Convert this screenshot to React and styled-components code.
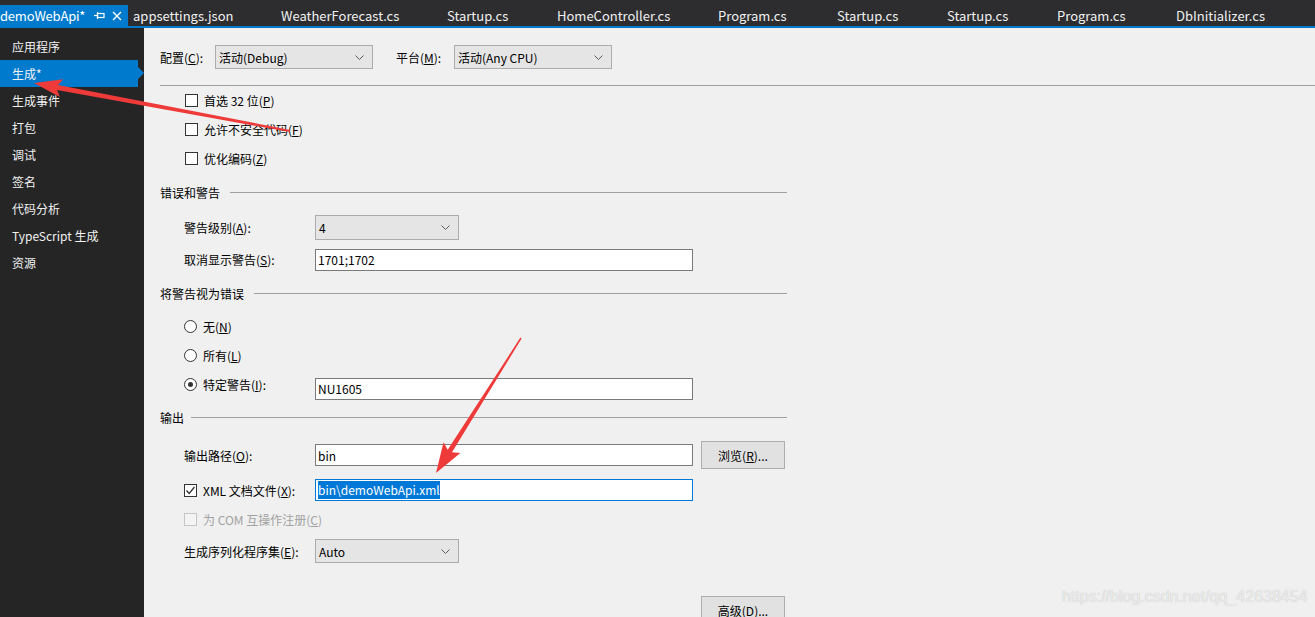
import React from 'react'
import styled, { createGlobalStyle } from 'styled-components'

const GlobalStyle = createGlobalStyle`
  html, body {
    margin: 0;
    padding: 0;
    background: #f0f0f0;
    overflow: hidden;
  }
  body {
    font-family: "Noto Sans CJK SC", "Noto Sans", sans-serif;
  }
`

const Page = styled.div`
  position: relative;
  width: 1315px;
  height: 617px;
  display: flex;
  flex-direction: column;
  overflow: hidden;
  background: #f0f0f0;
`

const TabBar = styled.div`
  flex: none;
  height: 26px;
  display: flex;
  align-items: flex-end;
  background: #2d2d30;
  border-bottom: 2px solid #007acc;
  white-space: nowrap;
  overflow: hidden;
`

const Tab = styled.div`
  flex: none;
  width: ${p => p.$w}px;
  height: 21px;
  box-sizing: border-box;
  display: flex;
  align-items: center;
  padding-left: ${p => (p.$active ? 0 : 5)}px;
  background: ${p => (p.$active ? '#007acc' : 'transparent')};
  color: ${p => (p.$active ? '#ffffff' : '#f1f1f1')};
  font-size: 13px;
  line-height: 21px;
`

const TabTitle = styled.span`
  flex: none;
  letter-spacing: -0.2px;
`

const TabIcons = styled.span`
  display: flex;
  align-items: center;
  gap: 7px;
  margin-left: 9px;
`

const Main = styled.div`
  flex: 1;
  display: flex;
  min-height: 0;
`

const Sidebar = styled.nav`
  flex: none;
  width: 144px;
  box-sizing: border-box;
  padding-top: 4.5px;
  background: #252526;
`

const NavItem = styled.div`
  position: relative;
  width: 138px;
  height: 27px;
  box-sizing: border-box;
  padding-left: 12px;
  line-height: 27px;
  font-size: 12px;
  color: #f1f1f1;
  background: ${p => (p.$active ? '#007acc' : 'transparent')};

  &::after {
    content: '';
    display: ${p => (p.$active ? 'block' : 'none')};
    position: absolute;
    left: 138px;
    top: 7px;
    border-left: 6px solid #007acc;
    border-top: 6.5px solid transparent;
    border-bottom: 6.5px solid transparent;
  }
`

const Panel = styled.main`
  flex: 1;
  box-sizing: border-box;
  padding: 12px 0 0 16px;
  font-size: 12px;
  color: #000;
`

const TopRow = styled.div`
  height: 34px;
  display: flex;
  align-items: center;
`

const TopLabel = styled.span`
  flex: none;
  width: ${p => p.$w}px;
  margin-left: ${p => p.$ml || 0}px;
  white-space: nowrap;
`

const Rule = styled.div`
  margin-top: 11px;
  height: 1px;
  background: #a0a0a0;
`

const Column = styled.div`
  width: 627px;
`

const CheckRow = styled.div`
  height: 29px;
  display: flex;
  align-items: center;
  gap: 6px;
  padding-left: 25px;
`

const SectionHead = styled.div`
  height: 20px;
  margin-top: ${p => p.$mt}px;
  display: flex;
  align-items: center;

  &::after {
    content: '';
    flex: 1;
    height: 1px;
    margin-left: ${p => p.$gap || 10}px;
    background: #a0a0a0;
  }
`

const SectionBody = styled.div`
  padding: ${p => p.$pt}px 0 0 24px;
`

const FieldRow = styled.div`
  height: ${p => p.$h}px;
  display: flex;
  align-items: center;
`

const LabelCell = styled.div`
  flex: none;
  width: 131px;
  display: flex;
  align-items: center;
  gap: 6px;
  white-space: nowrap;
  color: ${p => (p.$disabled ? '#a2a2a2' : '#000')};
`

const SelectBox = styled.div`
  flex: none;
  width: ${p => p.$w}px;
  height: ${p => p.$h || 25}px;
  box-sizing: border-box;
  display: flex;
  align-items: center;
  justify-content: space-between;
  padding: 0 8px 0 3px;
  border: 1px solid #acacac;
  background: #e5e5e5;
  font-size: 12px;
`

const TextBox = styled.div`
  flex: none;
  width: 378px;
  height: 22px;
  box-sizing: border-box;
  display: flex;
  align-items: center;
  padding-left: 2px;
  margin-top: ${p => p.$shift || 0}px;
  border: 1px solid ${p => (p.$focus ? '#0078d7' : '#7a7a7a')};
  background: #fff;
  font-size: 12px;
`

const Selected = styled.span`
  background: #0078d7;
  color: #fff;
  line-height: 18px;
`

const Button = styled.div`
  flex: none;
  width: 84px;
  height: 28px;
  box-sizing: border-box;
  margin-left: ${p => p.$ml || 0}px;
  display: flex;
  align-items: center;
  justify-content: center;
  border: 1px solid #adadad;
  background: #e1e1e1;
  font-size: 12px;
`

const BottomRow = styled.div`
  margin-top: 24px;
  display: flex;
  justify-content: flex-end;
  padding-right: 2px;
`

const Box = styled.span`
  flex: none;
  width: 13px;
  height: 13px;
  box-sizing: border-box;
  display: inline-flex;
  align-items: center;
  justify-content: center;
  border: 1px solid ${p => (p.$disabled ? '#c6c6c6' : '#333')};
  border-radius: ${p => (p.$round ? '50%' : '0')};
  background: ${p => (p.$disabled ? '#f4f4f4' : '#fff')};
`

const Dot = styled.span`
  width: 5px;
  height: 5px;
  border-radius: 50%;
  background: #333;
`

const Key = styled.u`
  text-underline-offset: 1px;
`

const Overlay = styled.svg`
  position: absolute;
  left: 0;
  top: 0;
  pointer-events: none;
`

const Watermark = styled.div`
  position: absolute;
  left: 1062px;
  top: 588px;
  font-family: "Liberation Sans", Arial, sans-serif;
  font-size: 16px;
  color: #ececec;
  text-shadow: 0 0 1px #b8b8b8;
  pointer-events: none;
`

const Chevron = () => (
  <svg width="9" height="5" viewBox="0 0 9 5">
    <polyline points="0.5,0.5 4.5,4.5 8.5,0.5" fill="none" stroke="#5a5a5a" strokeWidth="1" />
  </svg>
)

const Check = ({ checked, disabled }) => (
  <Box $disabled={disabled}>
    {checked && (
      <svg width="11" height="11" viewBox="0 0 11 11">
        <polyline points="1.5,5.5 4.2,8.5 9.5,2" fill="none" stroke="#333" strokeWidth="1.3" />
      </svg>
    )}
  </Box>
)

const Radio = ({ checked }) => <Box $round>{checked && <Dot />}</Box>

const PinIcon = () => (
  <svg width="11" height="9" viewBox="0 0 11 9">
    <line x1="0" y1="4.5" x2="3.5" y2="4.5" stroke="#fff" strokeWidth="1.2" />
    <line x1="3.5" y1="1" x2="3.5" y2="8" stroke="#fff" strokeWidth="1.2" />
    <rect x="3.5" y="2.5" width="6.5" height="4" fill="none" stroke="#fff" strokeWidth="1.2" />
  </svg>
)

const CloseIcon = () => (
  <svg width="10" height="10" viewBox="0 0 10 10">
    <path d="M1 1 L9 9 M9 1 L1 9" stroke="#fff" strokeWidth="1.4" />
  </svg>
)

function arrow([x1, y1], [x2, y2], tailW, shaftW, headLen, headW) {
  const dx = x2 - x1
  const dy = y2 - y1
  const len = Math.hypot(dx, dy)
  const ux = dx / len
  const uy = dy / len
  const nx = -uy
  const ny = ux
  const bx = x2 - ux * headLen
  const by = y2 - uy * headLen
  const nb = x => x.toFixed(1)
  const pts = [
    [x1 + (nx * tailW) / 2, y1 + (ny * tailW) / 2],
    [bx + ux * 4 + (nx * shaftW) / 2, by + uy * 4 + (ny * shaftW) / 2],
    [bx + (nx * headW) / 2, by + (ny * headW) / 2],
    [x2, y2],
    [bx - (nx * headW) / 2, by - (ny * headW) / 2],
    [bx + ux * 4 - (nx * shaftW) / 2, by + uy * 4 - (ny * shaftW) / 2],
    [x1 - (nx * tailW) / 2, y1 - (ny * tailW) / 2],
  ]
  return pts.map(p => `${nb(p[0])},${nb(p[1])}`).join(' ')
}

const tabs = [
  { name: 'appsettings.json', w: 148 },
  { name: 'WeatherForecast.cs', w: 166 },
  { name: 'Startup.cs', w: 110 },
  { name: 'HomeController.cs', w: 161 },
  { name: 'Program.cs', w: 119 },
  { name: 'Startup.cs', w: 110 },
  { name: 'Startup.cs', w: 110 },
  { name: 'Program.cs', w: 119 },
  { name: 'DbInitializer.cs', w: 150 },
]

const navItems = ['应用程序', '生成*', '生成事件', '打包', '调试', '签名', '代码分析', 'TypeScript 生成', '资源']

export default function App() {
  return (
    <>
      <GlobalStyle />
      <Page>
        <TabBar>
          <Tab $active $w={128}>
            <TabTitle>demoWebApi*</TabTitle>
            <TabIcons>
              <PinIcon />
              <CloseIcon />
            </TabIcons>
          </Tab>
          {tabs.map((t, i) => (
            <Tab key={i} $w={t.w}>
              {t.name}
            </Tab>
          ))}
        </TabBar>

        <Main>
          <Sidebar>
            {navItems.map((n, i) => (
              <NavItem key={n} $active={i === 1}>
                {n}
              </NavItem>
            ))}
          </Sidebar>

          <Panel>
            <TopRow>
              <TopLabel $w={55}>
                配置(<Key>C</Key>):
              </TopLabel>
              <SelectBox $w={158} $h={24}>
                活动(Debug)
                <Chevron />
              </SelectBox>
              <TopLabel $w={58} $ml={23}>
                平台(<Key>M</Key>):
              </TopLabel>
              <SelectBox $w={158} $h={24}>
                活动(Any CPU)
                <Chevron />
              </SelectBox>
            </TopRow>
            <Rule />

            <Column>
              <CheckRow>
                <Check />
                <span>
                  首选 32 位(<Key>P</Key>)
                </span>
              </CheckRow>
              <CheckRow>
                <Check />
                <span>
                  允许不安全代码(<Key>F</Key>)
                </span>
              </CheckRow>
              <CheckRow>
                <Check />
                <span>
                  优化编码(<Key>Z</Key>)
                </span>
              </CheckRow>

              <SectionHead $mt={9}>错误和警告</SectionHead>
              <SectionBody $pt={9.5}>
                <FieldRow $h={32}>
                  <LabelCell>
                    <span>
                      警告级别(<Key>A</Key>):
                    </span>
                  </LabelCell>
                  <SelectBox $w={144}>
                    4
                    <Chevron />
                  </SelectBox>
                </FieldRow>
                <FieldRow $h={32}>
                  <LabelCell>
                    <span>
                      取消显示警告(<Key>S</Key>):
                    </span>
                  </LabelCell>
                  <TextBox>1701;1702</TextBox>
                </FieldRow>
              </SectionBody>

              <SectionHead $mt={7.5}>将警告视为错误</SectionHead>
              <SectionBody $pt={9}>
                <FieldRow $h={29}>
                  <LabelCell>
                    <Radio />
                    <span>
                      无(<Key>N</Key>)
                    </span>
                  </LabelCell>
                </FieldRow>
                <FieldRow $h={29}>
                  <LabelCell>
                    <Radio />
                    <span>
                      所有(<Key>L</Key>)
                    </span>
                  </LabelCell>
                </FieldRow>
                <FieldRow $h={29}>
                  <LabelCell>
                    <Radio checked />
                    <span>
                      特定警告(<Key>I</Key>):
                    </span>
                  </LabelCell>
                  <TextBox $shift={8}>NU1605</TextBox>
                </FieldRow>
              </SectionBody>

              <SectionHead $mt={8} $gap={7}>
                输出
              </SectionHead>
              <SectionBody $pt={11}>
                <FieldRow $h={34}>
                  <LabelCell>
                    <span>
                      输出路径(<Key>O</Key>):
                    </span>
                  </LabelCell>
                  <TextBox>bin</TextBox>
                  <Button $ml={8}>
                    <span>
                      浏览(<Key>R</Key>)...
                    </span>
                  </Button>
                </FieldRow>
                <FieldRow $h={36}>
                  <LabelCell>
                    <Check checked />
                    <span>
                      XML 文档文件(<Key>X</Key>):
                    </span>
                  </LabelCell>
                  <TextBox $focus>
                    <Selected>bin\demoWebApi.xml</Selected>
                  </TextBox>
                </FieldRow>
                <FieldRow $h={22}>
                  <LabelCell $disabled>
                    <Check disabled />
                    <span>
                      为 COM 互操作注册(<Key>C</Key>)
                    </span>
                  </LabelCell>
                </FieldRow>
                <FieldRow $h={42}>
                  <LabelCell>
                    <span>
                      生成序列化程序集(<Key>E</Key>):
                    </span>
                  </LabelCell>
                  <SelectBox $w={144} $h={24}>
                    Auto
                    <Chevron />
                  </SelectBox>
                </FieldRow>
              </SectionBody>

              <BottomRow>
                <Button>
                  <span>
                    高级(<Key>D</Key>)...
                  </span>
                </Button>
              </BottomRow>
            </Column>
          </Panel>
        </Main>

        <Overlay width="1315" height="617" viewBox="0 0 1315 617">
          <polygon points={arrow([290, 131], [34, 83], 2, 5, 28, 18)} fill="#ef3a3a" />
          <polygon points={arrow([521, 338], [436, 473], 1.5, 5, 30, 20)} fill="#ef3a3a" />
        </Overlay>
        <Watermark>https://blog.csdn.net/qq_42638454</Watermark>
      </Page>
    </>
  )
}
